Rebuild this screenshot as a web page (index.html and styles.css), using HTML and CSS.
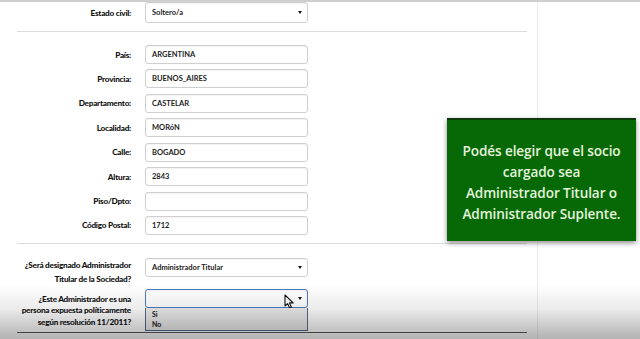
FILE: index.html
```html
<!DOCTYPE html>
<html lang="es">
<head>
<meta charset="utf-8">
<title>Formulario socio</title>
<link rel="stylesheet" href="styles.css">
</head>
<body>
<div class="page">
  <main class="col">
    <form class="form">
      <div class="row row-top">
        <label class="lbl">Estado civil:</label>
        <div class="sel sel-tall"><span>Soltero/a</span><i class="caret"></i></div>
      </div>
      <div class="sep"></div>
      <div class="fields">
        <label class="lbl">País:</label><div class="inp">ARGENTINA</div>
        <label class="lbl">Provincia:</label><div class="inp">BUENOS_AIRES</div>
        <label class="lbl">Departamento:</label><div class="inp">CASTELAR</div>
        <label class="lbl">Localidad:</label><div class="inp">MORóN</div>
        <label class="lbl">Calle:</label><div class="inp">BOGADO</div>
        <label class="lbl">Altura:</label><div class="inp">2843</div>
        <label class="lbl">Piso/Dpto:</label><div class="inp"></div>
        <label class="lbl">Código Postal:</label><div class="inp">1712</div>
      </div>
      <div class="sep sep2"></div>
      <div class="admin">
        <label class="lbl lbl-two">¿Será designado Administrador<br>Titular de la Sociedad?</label>
        <div class="sel"><span>Administrador Titular</span><i class="caret"></i></div>
        <label class="lbl lbl-three">¿Este Administrador es una<br>persona expuesta políticamente<br>según resolución 11/2011?</label>
        <div class="sel-wrap">
          <div class="sel sel-focus"><span></span>
            <svg class="cursor" width="11" height="15" viewBox="0 0 11 15"><path d="M1 1 L1 12 L3.6 9.6 L5.6 14 L7.4 13.2 L5.5 8.9 L9.2 8.9 Z" fill="#fff" stroke="#111" stroke-width="1.1" stroke-linejoin="round"/></svg>
            <i class="caret"></i></div>
          <ul class="menu"><li>Si</li><li>No</li></ul>
        </div>
      </div>
      <div class="sep sep3"></div>
    </form>
  </main>
  <div class="callout">
    <p>Podés elegir que el socio<br>cargado sea<br>Administrador Titular o<br>Administrador Suplente.</p>
  </div>
  <div class="fade"></div>
</div>
</body>
</html>
```

FILE: styles.css
```css
* { box-sizing: border-box; margin: 0; padding: 0; }
html, body { width: 640px; height: 339px; overflow: hidden; background: #fff; }
body { font-family: "Lato", sans-serif; color: #111; }
.page { position: relative; width: 640px; height: 339px; border-top: 2px solid #cfcfcf; overflow: hidden; }
.col { width: 538px; height: 337px; border-right: 1px solid #ececec; }
.form { width: 527px; padding-left: 17px; }
.row, .fields, .admin { display: grid; grid-template-columns: 114px 163px; column-gap: 14px; align-items: center; }
.row-top { height: 21px; }
.lbl { font-family: "Lato", sans-serif; font-size: 8.2px; font-weight: 900; text-align: right; letter-spacing: -0.25px; color: #111; white-space: nowrap; }
.sel, .inp { height: 19px; border: 1px solid #cfcfcf; border-radius: 3px; background: #fff; display: flex; align-items: center; padding-left: 6px; font-family: "Lato", sans-serif; font-size: 7.5px; font-weight: 700; color: #222; box-shadow: inset 0 1px 1px rgba(0,0,0,0.05); }
.sel { padding-right: 5px; justify-content: space-between; }
.sel-tall { height: 21px; }
.caret { width: 0; height: 0; border-left: 2.5px solid transparent; border-right: 2.5px solid transparent; border-top: 3.5px solid #111; }
.sep { height: 1px; background: #dcdcdc; margin: 8px 0 13px; }
.fields { row-gap: 5.43px; }
.sep2 { margin: 8px 0 14px; }
.admin { row-gap: 3px; align-items: start; }
.lbl-two { line-height: 14px; }
.lbl-three { line-height: 11.5px; padding-top: 5px; }
.sel-wrap { position: relative; }
.sel-focus { border-color: #4d7bbf; position: relative; }
.cursor { position: absolute; right: 12px; top: 4px; }
.menu { position: absolute; left: 0; top: 19px; width: 163px; height: 23px; list-style: none; background: #ececec; border: 1px solid #56688a; border-top: none; font-family: "Lato", sans-serif; font-size: 7px; font-weight: 700; padding: 1px 0 0 6px; line-height: 10px; }
.sep3 { margin: 4px 0 0; background: #5a5a5a; width: 510px; }
.callout { position: absolute; left: 447px; top: 116px; width: 189px; height: 123px; background: #066906; border-top: 2px solid #0b3b0b; box-shadow: 0 2px 5px rgba(0,0,0,0.45); display: flex; align-items: center; justify-content: center; padding-top: 2px; }
.callout p { font-family: "Open Sans", sans-serif; font-size: 13.6px; line-height: 21px; text-align: center; color: #e4f4dc; font-weight: 600; letter-spacing: -0.1px; }
.fade { position: absolute; left: 0; right: 0; bottom: 0; height: 55px; background: linear-gradient(to bottom, rgba(0,0,0,0) 0%, rgba(0,0,0,0.08) 45%, rgba(0,0,0,0.3) 100%); pointer-events: none; }
```
